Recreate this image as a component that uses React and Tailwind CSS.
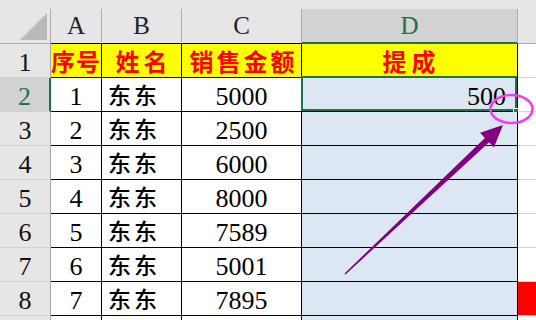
import React from 'react';

const SERIF = { fontFamily: '"Liberation Serif", "Times New Roman", serif' };
const CJK = { fontFamily: '"Noto Sans CJK SC", "Noto Sans", sans-serif' };

const rows = [
  ['1', '5000'],
  ['2', '2500'],
  ['3', '6000'],
  ['4', '8000'],
  ['5', '7589'],
  ['6', '5001'],
  ['7', '7895'],
];

function ColHeader({ label, className = '', active }) {
  return (
    <div
      className={`h-full flex items-center justify-center border-r border-[#ababab] text-[25px] ${
        active ? 'bg-[#d2d2d2] text-[#217346] border-b-2 border-b-[#217346]' : 'border-b border-b-black text-[#222]'
      } ${className}`}
      style={SERIF}
    >
      {label}
    </div>
  );
}

function RowHeader({ n, active }) {
  return (
    <div
      className={`w-[51px] h-full shrink-0 flex items-center justify-center pt-1 border-b border-[#d0d0d0] text-[26px] ${
        active
          ? 'bg-[#d2d2d2] text-[#217346] border-r-2 border-r-[#217346]'
          : 'bg-[#e6e6e6] text-[#111] border-r border-r-[#a8a8a8]'
      }`}
      style={SERIF}
    >
      {n}
    </div>
  );
}

function Cell({ w, className = '', children, style }) {
  return (
    <div className={`${w} h-full shrink-0 border-r border-b border-black flex items-center ${className}`} style={style}>
      {children}
    </div>
  );
}

function Overlay() {
  // tapered arrow from bottom-left towards the fill handle, plus the circle
  return (
    <svg className="absolute inset-0 pointer-events-none" width="536" height="320" viewBox="0 0 536 320">
      <polygon
        points="345.5,274.5 344.5,273.5 484.9,137.9 480.1,132.8 503,125 493.9,147.4 489.1,142.3"
        fill="#800080"
      />
      <ellipse cx="511.5" cy="109" rx="21" ry="14" fill="none" stroke="#f03cf0" strokeWidth="2.5" />
    </svg>
  );
}

export default function App() {
  return (
    <div className="relative w-[536px] h-[320px] overflow-hidden bg-white select-none">
      <div className="h-[9px] bg-[#e6e6e6]" />
      {/* column headers */}
      <div className="flex h-[35px] bg-[#e6e6e6]">
        <div className="w-[51px] shrink-0 h-full border-r border-b border-[#ababab] relative">
          <svg className="absolute left-0 top-0" width="50" height="34" viewBox="0 0 50 34">
            <polygon points="47,4 47,31 20,31" fill="#b9b9b9" />
          </svg>
        </div>
        <ColHeader label="A" className="w-[51px] shrink-0" />
        <ColHeader label="B" className="w-[80px] shrink-0" />
        <ColHeader label="C" className="w-[120px] shrink-0" />
        <ColHeader label="D" className="w-[216px] shrink-0" active />
        <div className="flex-1 h-full border-b border-[#ababab]" />
      </div>

      {/* row 1: titles */}
      <div className="flex h-[34px]">
        <RowHeader n="1" />
        <Cell w="w-[51px]" className="bg-[#ffff00] justify-center text-[#ff0000] font-semibold text-[24px] tracking-[1px]" style={CJK}>
          序号
        </Cell>
        <Cell w="w-[80px]" className="bg-[#ffff00] justify-center text-[#ff0000] font-semibold text-[24px] tracking-[4px] pl-1" style={CJK}>
          姓名
        </Cell>
        <Cell w="w-[120px]" className="bg-[#ffff00] justify-center text-[#ff0000] font-semibold text-[24px] tracking-[3px] pl-1" style={CJK}>
          销售金额
        </Cell>
        <Cell w="w-[216px]" className="bg-[#ffff00] justify-center text-[#ff0000] font-semibold text-[24px] tracking-[5px] pl-1" style={CJK}>
          提成
        </Cell>
        <div className="flex-1 h-full border-b border-[#d4d4d4]" />
      </div>

      {rows.map(([no, amount], i) => (
        <div key={no} className="flex h-[34px]">
          <RowHeader n={String(i + 2)} active={i === 0} />
          <Cell w="w-[51px]" className="justify-center pt-1 text-[26px] text-black" style={SERIF}>
            {no}
          </Cell>
          <Cell w="w-[80px]" className="pl-[6px] text-[23px] font-medium tracking-[3px] text-black" style={CJK}>
            东东
          </Cell>
          <Cell w="w-[120px]" className="justify-center pt-1 text-[26px] text-black" style={SERIF}>
            {amount}
          </Cell>
          <Cell w="w-[216px]" className="relative bg-[#dce7f3] justify-end pr-[11px] pt-1 text-[26px] text-black" style={SERIF}>
            {i === 0 && (
              <>
                500
                <div className="absolute -left-px -top-[2px] right-0 bottom-0 border-2 border-[#217346]" />
                <div className="absolute -right-[2px] -bottom-[3px] w-[6px] h-[6px] bg-[#217346] border border-white" />
              </>
            )}
          </Cell>
          <div className={`flex-1 h-full border-b border-[#d4d4d4] ${i === 6 ? 'bg-[#ff0000]' : ''}`} />
        </div>
      ))}

      {/* row 9, mostly cut off */}
      <div className="flex h-[34px]">
        <RowHeader n="" />
        <Cell w="w-[51px]" />
        <Cell w="w-[80px]" />
        <Cell w="w-[120px]" />
        <Cell w="w-[216px]" className="bg-[#dce7f3]" />
        <div className="flex-1 h-full" />
      </div>

      <Overlay />
    </div>
  );
}
